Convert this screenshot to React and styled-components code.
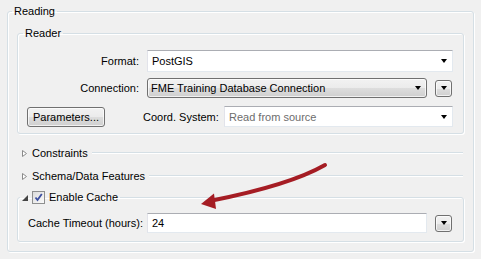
import React from "react";
import styled, { createGlobalStyle } from "styled-components";

const GlobalStyle = createGlobalStyle`
  html, body { margin: 0; padding: 0; background: #f0f0f0; }
  body {
    font-family: "Liberation Sans", Arial, sans-serif;
    font-size: 11px;
    color: #000;
  }
  * { box-sizing: border-box; }
`;

const Page = styled.div`
  position: relative;
  width: 481px;
  height: 259px;
  padding: 5px 7px 6px 7px;
  overflow: hidden;
`;

const Group = styled.fieldset`
  margin: 0;
  min-width: 0;
  border: 1px solid #d5dfe5;
  border-radius: 3px;
  box-shadow: inset 1px 1px 0 #fff, 1px 1px 0 #fff;
  padding: ${(p) => p.$pad};
`;

const Legend = styled.legend`
  padding: 0 2px;
  margin-left: ${(p) => p.$ml || 0}px;
  line-height: 13px;
  height: 13px;
  display: flex;
  align-items: center;
`;

const FormRow = styled.div`
  display: flex;
  align-items: center;
  height: ${(p) => p.$h}px;
  margin-top: ${(p) => p.$mt || 0}px;
`;

const Label = styled.span`
  width: ${(p) => p.$w}px;
  flex: none;
  text-align: ${(p) => p.$align || "right"};
  margin-left: ${(p) => p.$ml || 0}px;
  margin-right: ${(p) => p.$mr || 8}px;
  white-space: nowrap;
`;

const Field = styled.div`
  height: ${(p) => p.$h}px;
  width: ${(p) => (p.$w ? `${p.$w}px` : "auto")};
  flex: ${(p) => (p.$w ? "none" : "1")};
  background: #fff;
  border: 1px solid;
  border-color: #abadb3 #e3e9ef #e3e9ef #e2e3ea;
  display: flex;
  align-items: center;
  padding: 0 0 0 4px;
  color: ${(p) => (p.$muted ? "#6d6d6d" : "#000")};
`;

const Combo = styled.div`
  height: ${(p) => p.$h}px;
  width: ${(p) => p.$w}px;
  flex: none;
  border: 1px solid #707070;
  border-radius: 3px;
  background: linear-gradient(#f2f2f2 0%, #ebebeb 50%, #dddddd 51%, #cfcfcf 100%);
  box-shadow: inset 0 0 0 1px rgba(255, 255, 255, 0.7);
  display: flex;
  align-items: center;
  padding-left: 3px;
`;

const FieldText = styled.span`
  flex: 1;
  white-space: nowrap;
`;

const Caret = styled.span`
  flex: none;
  width: 0;
  height: 0;
  border-left: 3.5px solid transparent;
  border-right: 3.5px solid transparent;
  border-top: 4px solid #000;
  margin-right: ${(p) => p.$mr}px;
`;

const SmallButton = styled.div`
  width: 17px;
  height: 17px;
  flex: none;
  margin-left: 8px;
  border: 1px solid #707070;
  border-radius: 3px;
  background: linear-gradient(#f2f2f2 0%, #ebebeb 50%, #dddddd 51%, #cfcfcf 100%);
  box-shadow: inset 0 0 0 1px rgba(255, 255, 255, 0.7);
  display: flex;
  align-items: center;
  justify-content: center;
`;

const Button = styled.div`
  width: 78px;
  height: 20px;
  flex: none;
  border: 1px solid #707070;
  border-radius: 3px;
  background: linear-gradient(#f2f2f2 0%, #ebebeb 50%, #dddddd 51%, #cfcfcf 100%);
  box-shadow: inset 0 0 0 1px rgba(255, 255, 255, 0.7);
  display: flex;
  align-items: center;
  justify-content: center;
`;

const Section = styled.div`
  display: flex;
  align-items: center;
  height: 14px;
  margin-top: ${(p) => p.$mt}px;
  padding-left: 5px;
  &::after {
    content: "";
    flex: 1;
    margin: 0 1px 0 4px;
    border-top: 1px solid #d5dfe5;
    border-bottom: 1px solid #fff;
  }
`;

const Twisty = styled.svg`
  flex: none;
  margin-right: ${(p) => p.$mr}px;
`;

const Check = styled.span`
  width: 13px;
  height: 13px;
  flex: none;
  border: 1px solid #8e8f8f;
  background: linear-gradient(135deg, #dcdcdc, #fafafa);
  display: flex;
  align-items: center;
  justify-content: center;
  margin-right: 4px;
`;

const CacheWrap = styled.div`
  margin-top: 8px;
`;

const Overlay = styled.svg`
  position: absolute;
  left: 0;
  top: 0;
  pointer-events: none;
`;

const CollapsedIcon = () => (
  <Twisty width="5" height="7" viewBox="0 0 5 7" $mr={5}>
    <polygon points="0.5,0.5 4.5,3.5 0.5,6.5" fill="#fff" stroke="#8a8a8a" strokeWidth="1" />
  </Twisty>
);

const ExpandedIcon = () => (
  <Twisty width="6" height="6" viewBox="0 0 6 6" $mr={4}>
    <polygon points="6,0 6,6 0,6" fill="#444" />
  </Twisty>
);

export default function App() {
  return (
    <Page>
      <GlobalStyle />
      <Group $pad="9px 9px 9px 9px">
        <Legend $ml={-5}>Reading</Legend>
        <Group $pad="10px 10px 6px 9px">
          <Legend $ml={-4}>Reader</Legend>
          <FormRow $h={22}>
            <Label $w={112}>Format:</Label>
            <Field $h={22}>
              <FieldText>PostGIS</FieldText>
              <Caret $mr={5} />
            </Field>
          </FormRow>
          <FormRow $h={20} $mt={6}>
            <Label $w={112}>Connection:</Label>
            <Combo $h={20} $w={280}>
              <FieldText>FME Training Database Connection</FieldText>
              <Caret $mr={5} />
            </Combo>
            <SmallButton>
              <Caret $mr={0} />
            </SmallButton>
          </FormRow>
          <FormRow $h={21} $mt={8}>
            <Button>Parameters...</Button>
            <Label $w={74} $ml={38} $mr={7} $align="left">Coord. System:</Label>
            <Field $h={21} $muted>
              <FieldText>Read from source</FieldText>
              <Caret $mr={5} />
            </Field>
          </FormRow>
        </Group>
        <Section $mt={12}>
          <CollapsedIcon />
          Constraints
        </Section>
        <Section $mt={9}>
          <CollapsedIcon />
          Schema/Data Features
        </Section>
        <CacheWrap>
          <Group $pad="9px 10px 8px 10px">
            <Legend $ml={-8}>
              <ExpandedIcon />
              <Check>
                <svg width="9" height="9" viewBox="0 0 9 9">
                  <path d="M1.5 4.5 L3.5 7 L7.8 1" fill="none" stroke="#3c4fa0" strokeWidth="1.8" />
                </svg>
              </Check>
              Enable Cache
            </Legend>
            <FormRow $h={20}>
              <Label $w={111} $align="left">Cache Timeout (hours):</Label>
              <Field $h={20} $w={280}>
                <FieldText>24</FieldText>
              </Field>
              <SmallButton>
                <Caret $mr={0} />
              </SmallButton>
            </FormRow>
          </Group>
        </CacheWrap>
      </Group>
      <Overlay width="481" height="259" viewBox="0 0 481 259">
        <path d="M325,165 Q290,185 212,200.5" fill="none" stroke="#a51d24" strokeWidth="4" strokeLinecap="round" />
        <polygon points="201,204 214,193.5 216,209" fill="#a51d24" />
      </Overlay>
    </Page>
  );
}
